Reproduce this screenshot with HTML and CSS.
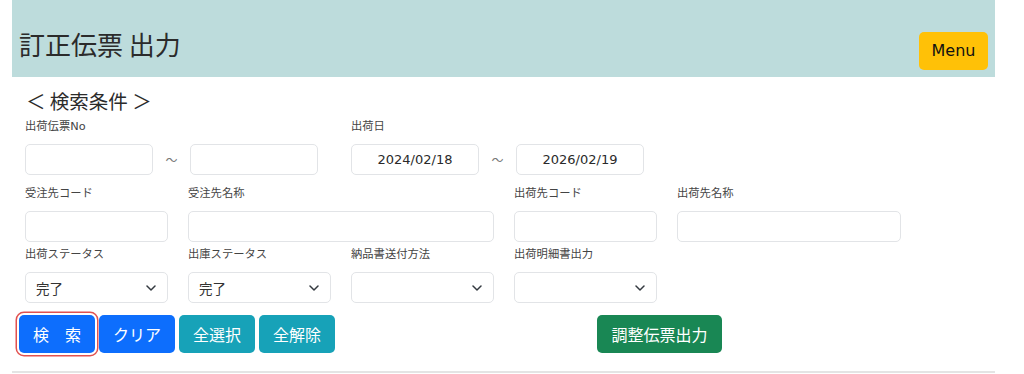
FILE: index.html
```html
<!DOCTYPE html>
<html lang="ja">
<head>
<meta charset="utf-8">
<title>訂正伝票 出力</title>
<link rel="stylesheet" href="styles.css">
</head>
<body>
<div class="page">
  <header class="header">
    <h1 class="title">訂正伝票 出力</h1>
    <button class="btn btn-menu" type="button">Menu</button>
  </header>

  <main class="content">
    <h2 class="section-title">＜ 検索条件 ＞</h2>

    <div class="form-grid row-1">
      <div class="field span-2">
        <label class="label">出荷伝票No</label>
        <div class="range">
          <input class="input input-range" type="text">
          <span class="tilde">～</span>
          <input class="input input-range" type="text">
        </div>
      </div>
      <div class="field span-2">
        <label class="label">出荷日</label>
        <div class="range">
          <input class="input input-range input-date" type="text" value="2024/02/18">
          <span class="tilde">～</span>
          <input class="input input-range input-date" type="text" value="2026/02/19">
        </div>
      </div>
    </div>

    <div class="form-grid row-2">
      <div class="field">
        <label class="label">受注先コード</label>
        <input class="input" type="text">
      </div>
      <div class="field span-2">
        <label class="label">受注先名称</label>
        <input class="input" type="text">
      </div>
      <div class="field">
        <label class="label">出荷先コード</label>
        <input class="input" type="text">
      </div>
      <div class="field span-2">
        <label class="label">出荷先名称</label>
        <input class="input input-wide" type="text">
      </div>
    </div>

    <div class="form-grid row-3">
      <div class="field">
        <label class="label">出荷ステータス</label>
        <div class="select-box">
          <span class="select-value">完了</span>
          <svg class="chevron" width="10" height="6" viewBox="0 0 10 6"><path d="M1 1l4 4 4-4" fill="none" stroke="#343a40" stroke-width="1.5" stroke-linecap="round" stroke-linejoin="round"/></svg>
        </div>
      </div>
      <div class="field">
        <label class="label">出庫ステータス</label>
        <div class="select-box">
          <span class="select-value">完了</span>
          <svg class="chevron" width="10" height="6" viewBox="0 0 10 6"><path d="M1 1l4 4 4-4" fill="none" stroke="#343a40" stroke-width="1.5" stroke-linecap="round" stroke-linejoin="round"/></svg>
        </div>
      </div>
      <div class="field">
        <label class="label">納品書送付方法</label>
        <div class="select-box">
          <span class="select-value"></span>
          <svg class="chevron" width="10" height="6" viewBox="0 0 10 6"><path d="M1 1l4 4 4-4" fill="none" stroke="#343a40" stroke-width="1.5" stroke-linecap="round" stroke-linejoin="round"/></svg>
        </div>
      </div>
      <div class="field">
        <label class="label">出荷明細書出力</label>
        <div class="select-box">
          <span class="select-value"></span>
          <svg class="chevron" width="10" height="6" viewBox="0 0 10 6"><path d="M1 1l4 4 4-4" fill="none" stroke="#343a40" stroke-width="1.5" stroke-linecap="round" stroke-linejoin="round"/></svg>
        </div>
      </div>
    </div>

    <div class="actions">
      <div class="actions-left">
        <button class="btn btn-primary btn-focus" type="button">検　索</button>
        <button class="btn btn-primary" type="button">クリア</button>
        <button class="btn btn-info" type="button">全選択</button>
        <button class="btn btn-info" type="button">全解除</button>
      </div>
      <button class="btn btn-success btn-output" type="button">調整伝票出力</button>
    </div>
  </main>

  <div class="bottom-line"></div>
</div>
</body>
</html>
```

FILE: styles.css
```css
* { box-sizing: border-box; }

html, body {
  margin: 0;
  padding: 0;
  background: #ffffff;
}

body {
  font-family: "DejaVu Sans", "Noto Sans CJK JP", sans-serif;
  color: #212529;
}

.page {
  width: 983px;
  margin-left: 12px;
}

.header {
  height: 77px;
  background: #bddcdc;
  display: flex;
  align-items: flex-end;
  justify-content: space-between;
  padding: 0 7px 7px 7px;
}

.title {
  margin: 0 0 10px 0;
  font-family: "Noto Sans CJK JP", sans-serif;
  font-weight: 400;
  font-size: 26px;
  line-height: 32px;
  color: #2b2b2b;
}

.btn {
  border: none;
  border-radius: 5px;
  font-family: "Noto Sans CJK JP", sans-serif;
  font-size: 16px;
  line-height: 22px;
  height: 38px;
  padding: 0;
  cursor: pointer;
  color: #ffffff;
}

.btn-menu {
  width: 69px;
  background: #ffc107;
  color: #111111;
  font-family: "DejaVu Sans", sans-serif;
  font-size: 16px;
}

.content {
  padding-left: 13px;
}

.section-title {
  margin: 12px 0 0 1px;
  font-family: "Noto Sans CJK JP", sans-serif;
  font-weight: 400;
  font-size: 19.5px;
  line-height: 24px;
  color: #2b2b2b;
}

.form-grid {
  display: grid;
  grid-template-columns: repeat(6, 143px);
  column-gap: 20px;
}

.row-1 { margin-top: 6px; }
.row-2 { margin-top: 11px; }
.row-3 { margin-top: 5px; }

.field {
  display: flex;
  flex-direction: column;
}

.span-2 { grid-column: span 2; }

.label {
  font-size: 11.3px;
  line-height: 16px;
  height: 16px;
  color: #444444;
  margin-bottom: 9px;
}

.input {
  height: 31px;
  width: 100%;
  border: 1px solid #e2e4e7;
  border-radius: 5px;
  background: #ffffff;
  font-family: "DejaVu Sans", "Noto Sans CJK JP", sans-serif;
  font-size: 13px;
  color: #2a2a2a;
  padding: 0 10px;
  outline: none;
}

.range {
  display: flex;
  align-items: center;
}

.input-range {
  width: 128px;
}

.input-date {
  text-align: center;
}

.tilde {
  width: 37px;
  text-align: center;
  font-family: "Noto Sans CJK JP", sans-serif;
  font-size: 12px;
  color: #777777;
}

.input-wide {
  width: 224px;
}

.select-box {
  height: 31px;
  border: 1px solid #e2e4e7;
  border-radius: 5px;
  background: #ffffff;
  display: flex;
  align-items: center;
  justify-content: space-between;
  padding: 0 11px 0 10px;
}

.select-value {
  font-family: "Noto Sans CJK JP", sans-serif;
  font-size: 13.5px;
  color: #333333;
}

.chevron {
  display: block;
}

.actions {
  display: flex;
  align-items: center;
  margin-top: 12px;
  margin-left: -6px;
}

.actions-left {
  display: flex;
  gap: 4px;
  width: 578px;
}

.actions-left .btn {
  width: 76px;
}

.btn-primary { background: #0d6efd; }
.btn-info { background: #17a2b8; }
.btn-success { background: #198754; }

.btn-focus {
  box-shadow: 0 0 0 2px #ffffff, 0 0 0 3.5px #e2514f;
}

.btn-output {
  width: 125px;
}

.bottom-line {
  margin-top: 18px;
  height: 2px;
  background: #e4e4e4;
}
```
